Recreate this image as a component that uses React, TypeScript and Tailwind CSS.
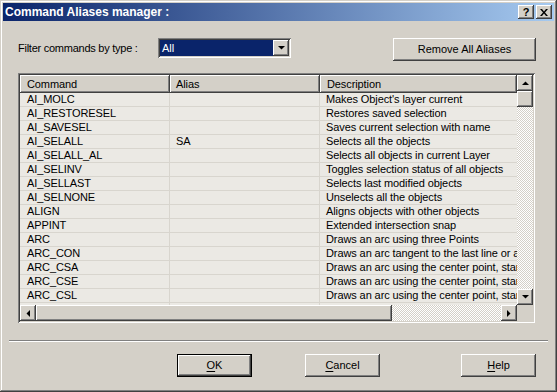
const raised =
  'bg-[#d4d0c8] shadow-[inset_-1px_-1px_0_#404040,inset_1px_1px_0_#ffffff,inset_-2px_-2px_0_#808080,inset_2px_2px_0_#d4d0c8]';
const sunken =
  'shadow-[inset_1px_1px_0_#808080,inset_-1px_-1px_0_#ffffff,inset_2px_2px_0_#404040,inset_-2px_-2px_0_#d4d0c8]';
const checker =
  'bg-[repeating-conic-gradient(#ffffff_0_25%,#d4d0c8_0_50%)] bg-[length:2px_2px]';

const rows = [
  { cmd: 'AI_MOLC', alias: '', desc: "Makes Object's layer current" },
  { cmd: 'AI_RESTORESEL', alias: '', desc: 'Restores saved selection' },
  { cmd: 'AI_SAVESEL', alias: '', desc: 'Saves current selection with name' },
  { cmd: 'AI_SELALL', alias: 'SA', desc: 'Selects all the objects' },
  { cmd: 'AI_SELALL_AL', alias: '', desc: 'Selects all objects in current Layer' },
  { cmd: 'AI_SELINV', alias: '', desc: 'Toggles selection status of all objects' },
  { cmd: 'AI_SELLAST', alias: '', desc: 'Selects last modified objects' },
  { cmd: 'AI_SELNONE', alias: '', desc: 'Unselects all the objects' },
  { cmd: 'ALIGN', alias: '', desc: 'Aligns objects with other objects' },
  { cmd: 'APPINT', alias: '', desc: 'Extended intersection snap' },
  { cmd: 'ARC', alias: '', desc: 'Draws an arc using three Points' },
  { cmd: 'ARC_CON', alias: '', desc: 'Draws an arc tangent to the last line or arc' },
  { cmd: 'ARC_CSA', alias: '', desc: 'Draws an arc using the center point, start point and angle' },
  { cmd: 'ARC_CSE', alias: '', desc: 'Draws an arc using the center point, start point and end point' },
  { cmd: 'ARC_CSL', alias: '', desc: 'Draws an arc using the center point, start point and length' },
  { cmd: 'ARC_SCA', alias: '', desc: 'Draws an arc using the start point, center point and angle' },
];

function Tri({ dir }: { dir: 'up' | 'down' | 'left' | 'right' }) {
  const pts = {
    up: '0,4 7,4 3.5,0.5',
    down: '0,0 7,0 3.5,3.5',
    left: '4,0 4,7 0.5,3.5',
    right: '0,0 0,7 3.5,3.5',
  }[dir];
  const vert = dir === 'up' || dir === 'down';
  return (
    <svg width={vert ? 7 : 4} height={vert ? 4 : 7} viewBox={vert ? '0 0 7 4' : '0 0 4 7'}>
      <polygon points={pts} fill="#000" />
    </svg>
  );
}

function ScrollBtn({ dir }: { dir: 'up' | 'down' | 'left' | 'right' }) {
  return (
    <div className={`${raised} grid size-[16px] shrink-0 place-items-center`}>
      <Tri dir={dir} />
    </div>
  );
}

export default function App() {
  return (
    <div className="flex h-[392px] w-[557px] flex-col bg-[#d4d0c8] p-[3px] font-['Liberation_Sans',Arial,sans-serif] text-[11px] text-black shadow-[inset_-1px_-1px_0_#404040,inset_1px_1px_0_#d4d0c8,inset_-2px_-2px_0_#808080,inset_2px_2px_0_#ffffff]">
      {/* title bar */}
      <div className="flex h-[18px] shrink-0 items-center bg-[linear-gradient(to_right,#0a246a,#a6caf0)] pr-[2px] pl-[2px]">
        <span className="text-[12px] font-bold text-white">Command Aliases manager :</span>
        <div className="ml-auto flex gap-[2px]">
          <div className={`${raised} flex h-[14px] w-[16px] items-center justify-center text-[11px] leading-none font-bold`}>
            ?
          </div>
          <div className={`${raised} flex h-[14px] w-[16px] items-center justify-center`}>
            <svg width="8" height="7" viewBox="0 0 8 7">
              <path d="M0 0h2l2 2.5L6 0h2L5 3.5 8 7H6L4 4.5 2 7H0l3-3.5z" fill="#000" />
            </svg>
          </div>
        </div>
      </div>

      {/* filter row */}
      <div className="mt-[17px] flex items-start pl-[15px]">
        <span className="h-[20px] w-[140px] leading-[20px] tracking-[-0.25px]">Filter commands by type :</span>
        <div className={`${sunken} flex h-[20px] w-[133px] bg-white p-[2px]`}>
          <div className="flex-1 bg-[#0a246a] pl-[2px] leading-[16px] text-white">All</div>
          <ScrollBtn dir="down" />
        </div>
        <button className={`${raised} ml-[102px] h-[23px] w-[143px]`}>Remove All Aliases</button>
      </div>

      {/* list view */}
      <div className={`${sunken} mt-[12px] ml-[15px] grid h-[250px] w-[517px] grid-cols-[1fr_16px] grid-rows-[1fr_16px] p-[2px]`}>
        <div className="overflow-hidden bg-[#ebe9e4] tracking-[-0.1px]">
          <div className="flex h-[18px] bg-[#d4d0c8]">
            <div className={`${raised} w-[150px] shrink-0 pl-[7px] leading-[18px]`}>Command</div>
            <div className={`${raised} w-[150px] shrink-0 pl-[6px] leading-[18px]`}>Alias</div>
            <div className={`${raised} flex-1 pl-[7px] leading-[18px]`}>Description</div>
          </div>
          {rows.map(r => (
            <div key={r.cmd} className="flex h-[14px] border-b border-[#d8d5ce] leading-[13px] whitespace-nowrap">
              <div className="w-[150px] shrink-0 border-r border-[#d8d5ce] pl-[7px]">{r.cmd}</div>
              <div className="w-[150px] shrink-0 border-r border-[#d8d5ce] pl-[6px]">{r.alias}</div>
              <div className="min-w-0 flex-1 overflow-hidden pl-[6px]">{r.desc}</div>
            </div>
          ))}
        </div>
        <div className="flex flex-col">
          <ScrollBtn dir="up" />
          <div className={`${raised} h-[16px] shrink-0`} />
          <div className={`${checker} flex-1`} />
          <ScrollBtn dir="down" />
        </div>
        <div className="flex">
          <ScrollBtn dir="left" />
          <div className={`${raised} w-[356px] shrink-0`} />
          <div className={`${checker} flex-1`} />
          <ScrollBtn dir="right" />
        </div>
        <div className="bg-[#d4d0c8]" />
      </div>

      {/* separator */}
      <div className="mt-[17px] ml-[6px] h-[2px] w-[539px] border-t border-b border-t-[#808080] border-b-white" />

      {/* buttons */}
      <div className="mt-[12px] flex pl-[174px]">
        <button className="h-[23px] w-[75px] border border-black bg-[#d4d0c8] shadow-[inset_-1px_-1px_0_#404040,inset_1px_1px_0_#ffffff,inset_-2px_-2px_0_#808080]">
          <span className="underline underline-offset-2">O</span>K
        </button>
        <button className={`${raised} ml-[53px] h-[23px] w-[75px]`}>
          <span className="underline underline-offset-2">C</span>ancel
        </button>
        <button className={`${raised} ml-[81px] h-[23px] w-[75px]`}>
          <span className="underline underline-offset-2">H</span>elp
        </button>
      </div>
    </div>
  );
}
